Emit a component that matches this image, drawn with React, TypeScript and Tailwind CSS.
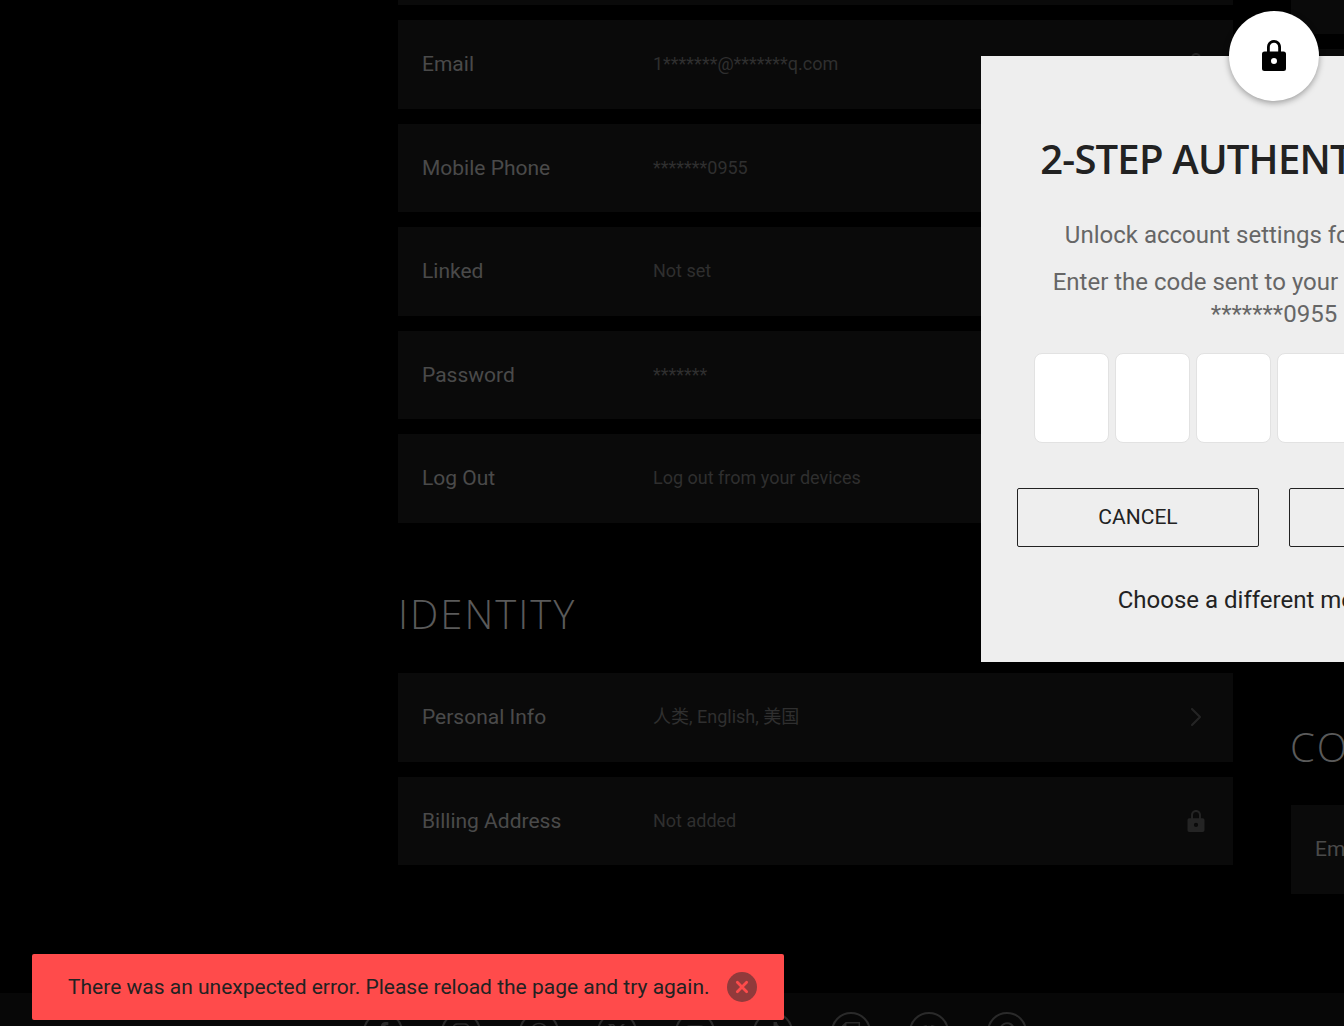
import { ChevronRight } from "lucide-react";
import { FaFacebookF, FaInstagram, FaPinterestP, FaTiktok, FaYoutube } from "react-icons/fa";
import { FaXTwitter, FaThreads, FaDiscord, FaTwitch } from "react-icons/fa6";

const accountRows = [
  { label: "Email", value: "1*******@*******q.com", icon: "lock" },
  { label: "Mobile Phone", value: "*******0955", icon: "chevron" },
  { label: "Linked", value: "Not set", icon: "chevron" },
  { label: "Password", value: "*******", icon: "chevron" },
  { label: "Log Out", value: "Log out from your devices", icon: "chevron" },
];

const identityRows = [
  { label: "Personal Info", value: "人类, English, 美国", icon: "chevron" },
  { label: "Billing Address", value: "Not added", icon: "lock" },
];

const footerIcons = [FaFacebookF, FaInstagram, FaThreads, FaXTwitter, FaYoutube, FaTiktok, FaTwitch, FaDiscord, FaPinterestP];

function SolidLock({ className }: { className?: string }) {
  return (
    <svg viewBox="0 0 24 31" className={className} fill="currentColor">
      <path
        fillRule="evenodd"
        d="M12 0C8 0 5 3 5 7V11.500H2.500A2.500 2.500 0 0 0 0 14V28.500A2.500 2.500 0 0 0 2.500 31H21.500A2.500 2.500 0 0 0 24 28.500V14A2.500 2.500 0 0 0 21.500 11.500H19V7C19 3 16 0 12 0ZM7.800 11.500V7C7.800 4.500 9.600 2.700 12 2.700S16.200 4.500 16.200 7V11.500ZM12 18A3 3 0 1 1 12 24A3 3 0 0 1 12 18Z"
      />
    </svg>
  );
}

function Row({ label, value, icon }: { label: string; value: string; icon: string }) {
  return (
    <div className="flex h-[88.5px] shrink-0 items-center bg-[#0a0a0a] pl-6 pr-[21px]">
      <div className="w-[231px] shrink-0 pt-px text-[21px] text-[#4a4a4a]">{label}</div>
      <div className="flex-1 pb-px text-[18px] text-[#2f2f2f]">{value}</div>
      <div className="flex w-8 justify-center">
        {icon === "lock" ? (
          <SolidLock className="h-[22px] w-[18px] text-[#242424]" />
        ) : (
          <ChevronRight className="h-8 w-8 text-[#242424]" strokeWidth={1.6} />
        )}
      </div>
    </div>
  );
}

function FooterIcons() {
  return (
    <div className="flex h-[33px] shrink-0 gap-[38px] bg-[#070707] pl-[363px] pt-[19px]">
      {footerIcons.map((Icon, i) => (
        <div key={i} className="flex h-10 w-10 shrink-0 items-center justify-center rounded-full border-2 border-[#2a2a2a]">
          <Icon className="h-5 w-5 text-[#2a2a2a]" />
        </div>
      ))}
    </div>
  );
}

export default function App() {
  return (
    <div className="relative h-[1026px] w-[1344px] overflow-hidden bg-black font-['Roboto','Noto_Sans_CJK_SC',sans-serif]">
      <div className="flex h-[993px] gap-[58px] pl-[398px]">
        <main className="flex w-[835px] shrink-0 flex-col">
          <div className="h-[5px] bg-[#0a0a0a]" />
          <div className="mt-[15px] flex flex-col gap-[15px]">
            {accountRows.map((row) => (
              <Row key={row.label} {...row} />
            ))}
          </div>
          <h2 className="mt-[63px] h-[65px] font-['Open_Sans',sans-serif] text-[40px] font-light leading-[56px] tracking-[2px] text-[#5a5a5a]">
            IDENTITY
          </h2>
          <div className="mt-[22.5px] flex flex-col gap-[15px]">
            {identityRows.map((row) => (
              <Row key={row.label} {...row} />
            ))}
          </div>
        </main>
        <aside className="flex w-[400px] shrink-0 flex-col">
          <div className="h-[34px] bg-[#0a0a0a]" />
          <div className="mt-[15px] h-[89px] bg-[#0a0a0a]" />
          <h2 className="-ml-px mt-[581px] h-[86px] font-['Open_Sans',sans-serif] text-[40px] font-light leading-[56px] tracking-[2px] text-[#5a5a5a]">
            CONTACT
          </h2>
          <div className="flex h-[89px] items-center bg-[#0a0a0a] pl-6 text-[21px] text-[#4a4a4a]">Email</div>
        </aside>
      </div>
      <FooterIcons />

      {/* modal runs past the right edge of the window */}
      <div className="absolute left-[981px] top-[56px] flex h-[606px] w-[586px] flex-col items-center bg-[#eeeeee]">
        <div className="absolute left-[248px] top-[-45px] flex h-[90px] w-[90px] items-center justify-center rounded-full bg-white shadow-[0_2px_6px_rgba(0,0,0,0.35)]">
          <SolidLock className="mb-[2px] h-[31px] w-6 text-black" />
        </div>
        <h1 className="mt-[75px] whitespace-nowrap font-['Open_Sans',sans-serif] text-[40px] font-semibold leading-[56px] tracking-[-0.8px] text-[#222222]">
          2-STEP AUTHENTICATION
        </h1>
        <p className="mt-[32px] whitespace-nowrap text-[24px] leading-[32px] text-[#666666]">
          Unlock account settings for 30 minutes
        </p>
        <p className="mt-[15px] w-[480px] text-center text-[24px] leading-[32px] text-[#666666]">
          Enter the code sent to your mobile phone.
          <br />
          *******0955
        </p>
        <div className="mt-[23px] flex gap-[6px]">
          {Array.from({ length: 6 }).map((_, i) => (
            <div key={i} className="h-[90px] w-[75px] rounded-[8px] border border-[#e2e2e2] bg-white" />
          ))}
        </div>
        <div className="mt-[45px] flex gap-[30px]">
          <button className="h-[59px] w-[242px] rounded-[2px] border border-[#222222] text-[21px] text-[#222222]">CANCEL</button>
          <button className="h-[59px] w-[242px] rounded-[2px] border border-[#222222] text-[21px] text-[#222222]">NEXT</button>
        </div>
        <a className="mt-[37px] flex items-center gap-1 text-[24px] leading-[32px] text-[#222222]">
          Choose a different method
          <ChevronRight className="h-6 w-6" />
        </a>
      </div>

      {/* error toast */}
      <div className="absolute bottom-[6px] left-[32px] flex h-[66px] w-[752px] items-center rounded-[2px] bg-[#ff4b4b] pl-[36px]">
        <span className="w-[659px] shrink-0 whitespace-nowrap pt-px text-[21px] text-[#222222]">
          There was an unexpected error. Please reload the page and try again.
        </span>
        <div className="flex h-[30px] w-[30px] items-center justify-center rounded-full bg-[#913a3b]">
          <svg viewBox="0 0 12 12" className="h-[14px] w-[14px]" stroke="#ff4b4b" strokeWidth="2.4" strokeLinecap="round">
            <path d="M2 2l8 8M10 2l-8 8" />
          </svg>
        </div>
      </div>
    </div>
  );
}
